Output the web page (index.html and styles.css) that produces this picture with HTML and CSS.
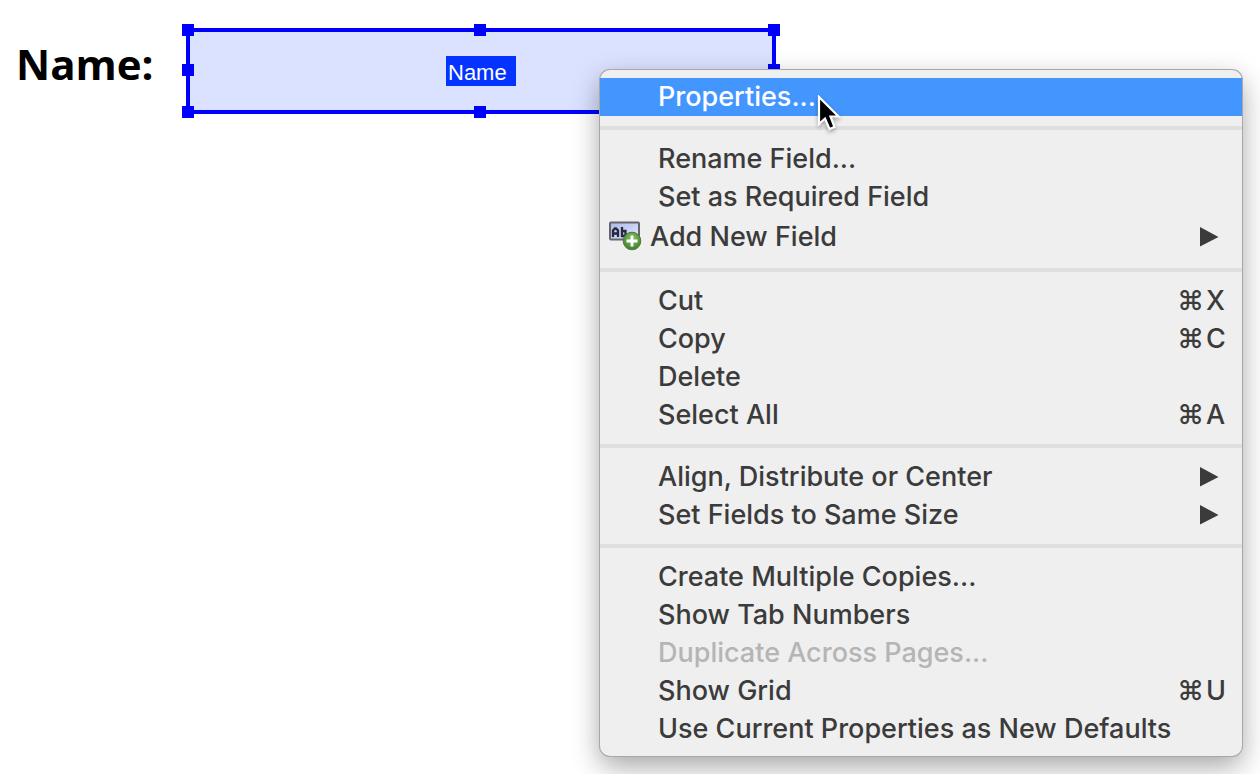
FILE: index.html
```html
<!DOCTYPE html>
<html lang="en">
<head>
<meta charset="utf-8">
<title>Form field editor</title>
<link rel="stylesheet" href="styles.css">
</head>
<body>
<main class="page">
  <div class="form-row">
    <label class="form-label" for="name-field">Name:</label>
    <div class="field">
      <input class="field-input" id="name-field" type="text" readonly>
      <span class="field-tag">Name</span>
      <i class="handle top left"></i>
      <i class="handle top center"></i>
      <i class="handle top right"></i>
      <i class="handle middle left"></i>
      <i class="handle middle right"></i>
      <i class="handle bottom left"></i>
      <i class="handle bottom center"></i>
      <i class="handle bottom right"></i>
    </div>
  </div>

  <div class="menu" role="menu">
    <button class="item active" role="menuitem">Properties...</button>
    <hr class="separator">
    <button class="item" role="menuitem">Rename Field...</button>
    <button class="item" role="menuitem">Set as Required Field</button>
    <button class="item with-icon" role="menuitem">
      <svg class="item-icon" width="34" height="32" viewBox="0 0 34 32" aria-hidden="true">
        <defs>
          <linearGradient id="box" x1="0" y1="0" x2="1" y2="1"><stop offset="0" stop-color="#a9b8e8"/><stop offset="1" stop-color="#e4eaff"/></linearGradient>
          <radialGradient id="plus" cx=".5" cy=".35" r=".65"><stop offset="0" stop-color="#8dc26a"/><stop offset="1" stop-color="#3f7f26"/></radialGradient>
        </defs>
        <rect x="2" y="1.500" width="29" height="17" rx="1" fill="url(#box)" stroke="#66666a" stroke-width="2"/>
        <path d="M5 16V9.500L7 7.500H8L10 9.500V16M5 12.500H10M14 6V15H17.500V10H14" fill="none" stroke="#26283c" stroke-width="2.300"/>
        <circle cx="24" cy="20" r="8.800" fill="url(#plus)" stroke="#4d7a38" stroke-width="1"/>
        <path d="M24 14.500V25.500M18.500 20H29.500" stroke="#fff" stroke-width="2.800"/>
      </svg>
      <span>Add New Field</span>
      <svg class="arrow" width="20" height="20" viewBox="0 0 20 20" aria-hidden="true"><path d="M0 0L18.500 10L0 19.500Z"/></svg>
    </button>
    <hr class="separator">
    <button class="item" role="menuitem">Cut<span class="shortcut"><span>⌘</span><span class="key">X</span></span></button>
    <button class="item" role="menuitem">Copy<span class="shortcut"><span>⌘</span><span class="key">C</span></span></button>
    <button class="item" role="menuitem">Delete</button>
    <button class="item" role="menuitem">Select All<span class="shortcut"><span>⌘</span><span class="key">A</span></span></button>
    <hr class="separator">
    <button class="item" role="menuitem">Align, Distribute or Center<svg class="arrow" width="20" height="20" viewBox="0 0 20 20" aria-hidden="true"><path d="M0 0L18.500 10L0 19.500Z"/></svg></button>
    <button class="item" role="menuitem">Set Fields to Same Size<svg class="arrow" width="20" height="20" viewBox="0 0 20 20" aria-hidden="true"><path d="M0 0L18.500 10L0 19.500Z"/></svg></button>
    <hr class="separator">
    <button class="item" role="menuitem">Create Multiple Copies...</button>
    <button class="item" role="menuitem">Show Tab Numbers</button>
    <button class="item" role="menuitem" disabled>Duplicate Across Pages...</button>
    <button class="item" role="menuitem">Show Grid<span class="shortcut"><span>⌘</span><span class="key">U</span></span></button>
    <button class="item" role="menuitem">Use Current Properties as New Defaults</button>
  </div>

  <svg class="cursor" width="26" height="38" viewBox="0 0 26 38" aria-hidden="true">
    <path d="M2 2V29L8 23.500L12.500 34L17.500 32L13.500 21.500H21.500Z" fill="#000" stroke="#fff" stroke-width="2.200" stroke-linejoin="miter"/>
  </svg>
</main>
</body>
</html>
```

FILE: styles.css
```css
* {
  box-sizing: border-box;
}

body {
  margin: 0;
  background: #fff;
  font-family: Inter, "Liberation Sans", sans-serif;
}

.page {
  position: relative;
  min-height: 100vh;
  overflow: hidden;
}

.form-row {
  display: flex;
  align-items: flex-start;
  padding: 28px 16px 0;
}

.form-label {
  width: 170px;
  font: 700 42px/72px "Open Sans", "Liberation Sans", sans-serif;
  color: #000;
}

.field {
  position: relative;
  display: flex;
  align-items: center;
  justify-content: center;
  flex: 0 1 590px;
  height: 86px;
  border: 4px solid #00f;
  background: #dbe2ff;
}

.field-input {
  position: absolute;
  inset: 0;
  width: 100%;
  border: 0;
  outline: 0;
  background: transparent;
}

.field-tag {
  position: relative;
  width: 70px;
  padding: 4px 2px 0;
  background: #0433ff;
  color: #fff;
  font: 22px/26px "Liberation Sans", sans-serif;
}

.handle {
  position: absolute;
  width: 12px;
  height: 12px;
  background: #00f;
}

.top { top: -8px; }
.middle { top: 32px; }
.bottom { bottom: -8px; }
.left { left: -8px; }
.center { left: calc(50% - 7px); }
.right { right: -8px; }

.menu {
  position: absolute;
  top: 70px;
  left: 600px;
  min-width: 642px;
  padding: 8px 0;
  border-radius: 10px;
  background: #efefef;
  box-shadow: 0 0 0 1px #a8a8a8, 0 10px 28px rgba(0, 0, 0, 0.36);
}

.item {
  display: flex;
  align-items: center;
  width: 100%;
  height: 38px;
  padding: 0 16px 0 58px;
  border: 0;
  background: transparent;
  color: #3b3b3b;
  font: 450 27px/38px Inter, "Liberation Sans", sans-serif;
  text-align: left;
  white-space: nowrap;
}

.item.active {
  background: #4496ff;
  color: #fff;
}

.item:disabled {
  color: #b5b5b5;
}

.with-icon {
  height: 42px;
  gap: 8px;
  padding-left: 8px;
}

.separator {
  height: 4px;
  margin: 10px 0;
  border: 0;
  background: #dfdfdf;
}

.arrow {
  margin-left: auto;
  margin-right: 6px;
  fill: #3b3b3b;
}

.shortcut {
  display: flex;
  gap: 2px;
  margin-left: auto;
}

.key {
  width: 20px;
}

.cursor {
  position: absolute;
  top: 95px;
  left: 817px;
  filter: drop-shadow(0 2px 2px rgba(0, 0, 0, 0.35));
}
```
